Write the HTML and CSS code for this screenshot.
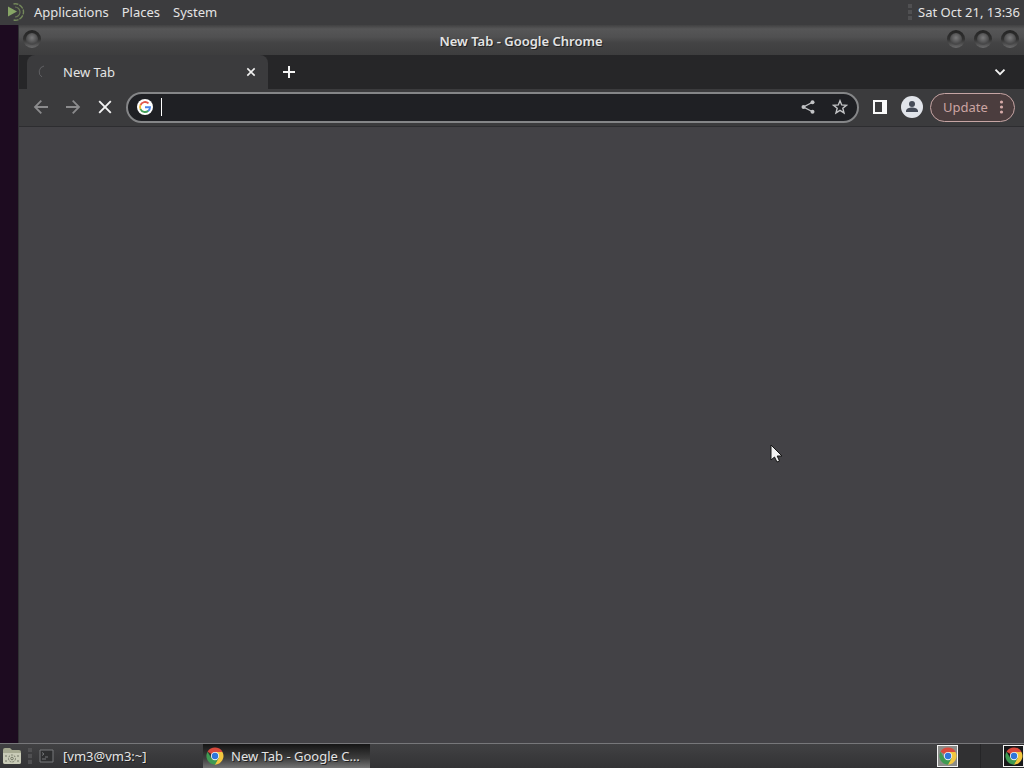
FILE: index.html
```html
<!DOCTYPE html>
<html lang="en">
<head>
<meta charset="utf-8">
<title>New Tab - Google Chrome</title>
<link rel="stylesheet" href="styles.css">
</head>
<body>
<svg class="defs" aria-hidden="true">
  <linearGradient id="rim" x2="0" y2="1"><stop offset="0" stop-color="#242424"/><stop offset=".5" stop-color="#303030"/><stop offset="1" stop-color="#6a6a6b"/></linearGradient>
  <radialGradient id="knob" cy=".4"><stop offset="0" stop-color="#7a7a7b"/><stop offset="1" stop-color="#484849"/></radialGradient>
  <symbol id="chrome" viewBox="0 0 48 48">
    <path fill="#d94a3d" d="M24 24 4.100 12.500A23 23 0 0 1 43.900 12.500L44 13H24z"/>
    <path fill="#f3c63f" d="M24 13h19.900A23 23 0 0 1 24 47l-1-1 10.500-16.500z"/>
    <path fill="#3f9a52" d="M4.100 12.500A23 23 0 0 0 24 47l10-17.500L24 35l-10-5.500z"/>
    <circle cx="24" cy="24" r="11" fill="#f4f4f4"/>
    <circle cx="24" cy="24" r="8.500" fill="#2f76dc"/>
  </symbol>
  <symbol id="orb" viewBox="0 0 20 20">
    <circle cx="10" cy="10" r="9" fill="url(#rim)"/>
    <circle cx="10" cy="10" r="6" fill="url(#knob)"/>
  </symbol>
</svg>
<header class="panel panel-top">
  <nav class="menus">
    <button class="menu"><svg class="distro" viewBox="0 0 20 20" fill="none" stroke="#73875a"><path d="M1 4.500v10l9-5z" fill="#87a566" stroke="none"/><path d="M6.500 2a8.200 8.200 0 1 1 0 16" stroke-width="1.400" stroke-dasharray="5 1"/><path d="M8 5a5 5 0 1 1 0 10" stroke="#6a7a56" stroke-width="1.200"/></svg>Applications</button>
    <button class="menu">Places</button>
    <button class="menu">System</button>
  </nav>
  <div class="clock"><span class="grip"></span><time datetime="2023-10-21T13:36">Sat Oct 21, 13:36</time></div>
</header>
<div class="desktop">
  <main class="window">
    <div class="titlebar">
      <div class="title-side"><button class="orb" aria-label="Window menu"><svg viewBox="0 0 20 20"><use href="#orb"/></svg></button></div>
      <h1 class="title">New Tab - Google Chrome</h1>
      <div class="title-side title-end">
        <button class="orb" aria-label="Minimize"><svg viewBox="0 0 20 20"><use href="#orb"/></svg></button>
        <button class="orb" aria-label="Maximize"><svg viewBox="0 0 20 20"><use href="#orb"/></svg></button>
        <button class="orb" aria-label="Close window"><svg viewBox="0 0 20 20"><use href="#orb"/></svg></button>
      </div>
    </div>
    <div class="tabs">
      <div class="tab">
        <svg class="spinner" viewBox="0 0 16 16" fill="none" stroke="#606063"><path d="M8 2a6 6 0 0 0-2 11"/></svg>
        <span class="tab-name">New Tab</span>
        <button class="icon small" aria-label="Close tab"><svg viewBox="0 0 16 16" fill="none" stroke="#f1f1f1" stroke-width="1.800"><path d="m3.800 3.800 8.400 8.400m0-8.400-8.400 8.400"/></svg></button>
      </div>
      <button class="icon add" aria-label="New tab"><svg viewBox="0 0 16 16" fill="none" stroke="#f5f5f5" stroke-width="2"><path d="M8 2v12M2 8h12"/></svg></button>
      <button class="icon search" aria-label="Search tabs"><svg viewBox="0 0 16 16" fill="none" stroke="#f1f1f1" stroke-width="1.900"><path d="m3.500 5.700 4.500 4.500 4.500-4.500"/></svg></button>
    </div>
    <div class="toolbar">
      <button class="icon" aria-label="Back"><svg viewBox="0 0 16 16" fill="none" stroke="#8b8b8d" stroke-width="1.800"><path d="M15 8H2m6.300-6.300L2 8l6.300 6.300"/></svg></button>
      <button class="icon" aria-label="Forward"><svg viewBox="0 0 16 16" fill="none" stroke="#8b8b8d" stroke-width="1.800"><path d="M1 8h13M7.700 1.700 14 8l-6.300 6.300"/></svg></button>
      <button class="icon" aria-label="Stop"><svg viewBox="0 0 16 16" fill="none" stroke="#f4f4f4" stroke-width="1.900"><path d="m2.200 2.200 11.600 11.600m0-11.600L2.200 13.800"/></svg></button>
      <div class="omnibox">
        <svg class="google" viewBox="0 0 16 16" fill="none" stroke-width="1.900"><circle cx="8" cy="8" r="8" fill="#fff"/><path stroke="#e2574c" d="M11.500 4.400A5 5 0 0 0 3.500 6"/><path stroke="#f1ba36" d="M3.500 5.800a5 5 0 0 0 0 4.400"/><path stroke="#43a05a" d="M3.400 10a5 5 0 0 0 7.900 1.800"/><path stroke="#4a84e8" d="M11.200 11.900A5 5 0 0 0 13 8.200H8"/></svg>
        <span class="caret"></span>
        <input class="address" type="text" aria-label="Address and search bar">
        <button class="icon" aria-label="Share"><svg viewBox="0 0 16 16"><path d="M13 3 3.500 8l9.500 5" fill="none" stroke="#c2c3c5" stroke-width="1.400"/><g fill="#c2c3c5"><circle cx="12.500" cy="3.300" r="2"/><circle cx="3.500" cy="8" r="2"/><circle cx="12.500" cy="12.700" r="2"/></g></svg></button>
        <button class="icon" aria-label="Bookmark this tab"><svg viewBox="0 0 16 16" fill="none" stroke="#c2c3c5" stroke-width="1.400"><path d="m8 1.700 1.700 4.200 4.700.4-3.600 3 1.200 4.600L8 11.400l-4 2.500 1.200-4.600-3.600-3 4.700-.4z"/></svg></button>
      </div>
      <button class="icon" aria-label="Side panel"><svg viewBox="0 0 16 16"><path fill="#fafafa" fill-rule="evenodd" d="M1 1h14v14H1zm2 2v10h7V3z"/></svg></button>
      <button class="avatar" aria-label="Profile"><svg viewBox="0 0 22 22"><circle cx="11" cy="11" r="11" fill="#e1e4ea"/><circle cx="11" cy="8" r="3" fill="#454b57"/><path d="M5 16v-1c0-2.500 3.500-3.500 6-3.500s6 1 6 3.500v1z" fill="#454b57"/></svg></button>
      <button class="update">Update<svg class="dots" viewBox="0 0 4 16" fill="#d5aaa8"><circle cx="2" cy="3" r="1.600"/><circle cx="2" cy="8" r="1.600"/><circle cx="2" cy="13" r="1.600"/></svg></button>
    </div>
    <section class="page" aria-label="Page"></section>
  </main>
</div>
<footer class="panel panel-bottom">
  <button class="files" aria-label="Files"><svg viewBox="0 0 20 18"><path d="M1 3q0-2 2-2h5l2 2h7q2 0 2 2v10q0 2-2 2H3q-2 0-2-2z" fill="#a7aa92"/><path d="M1 6h18v9q0 2-2 2H3q-2 0-2-2z" fill="#c9cbb7"/><g fill="none" stroke="#737766"><circle cx="10" cy="11.500" r="3.500" stroke-dasharray="2 1"/><circle cx="10" cy="11.500" r="1.300"/><path d="M3 9h2m10 0h2M3 14h2m10 0h2"/></g></svg></button>
  <span class="grip"></span>
  <button class="task"><svg class="terminal" viewBox="0 0 16 14"><path d="M1 1h13v12H1z" fill="#2e2f30" stroke="#77797a"/><path d="m3 3.500 2 1.500-2 1.500M6 8h3M3 10h4" fill="none" stroke="#747678"/></svg><span class="task-name">[vm3@vm3:~]</span></button>
  <button class="task active" title="New Tab - Google Chrome"><svg class="chrome" viewBox="0 0 48 48"><use href="#chrome"/></svg><span class="task-name">New Tab - Google C…</span></button>
  <div class="tray">
    <button class="tile light" aria-label="Workspace 1"><svg class="chrome" viewBox="0 0 48 48"><use href="#chrome"/></svg></button>
    <span class="divider"></span>
    <button class="tile" aria-label="Google Chrome"><svg class="chrome" viewBox="0 0 48 48"><use href="#chrome"/></svg></button>
  </div>
</footer>
<svg class="cursor" viewBox="0 0 14 20" aria-hidden="true"><path d="M1 1v15l3.500-3 2.500 5 2.500-1-2.300-5H12z" fill="#f2f2f2" stroke="#151515"/></svg>
</body>
</html>
```

FILE: styles.css
```css
* { box-sizing: border-box; }
body {
  display: flex;
  flex-direction: column;
  min-height: 100vh;
  margin: 0;
  background: #1d0b20;
  color: #e4e4e4;
  font: 13px/18px "Noto Sans", sans-serif;
}
button {
  display: flex;
  align-items: center;
  flex: none;
  padding: 0;
  border: 0;
  background: none;
  color: inherit;
  font: inherit;
}
svg { display: block; flex: none; }
.defs { position: absolute; width: 0; height: 0; }
.panel { display: flex; align-items: center; background: #3c3c3e; }
.panel-top { justify-content: space-between; height: 25px; padding: 0 4px 2px 7px; }
.menus { display: flex; gap: 13px; }
.distro { width: 20px; height: 20px; margin-right: 7px; }
.clock { display: flex; align-items: center; gap: 6px; }
.grip {
  width: 4px;
  height: 16px;
  background: repeating-linear-gradient(#505052 0 4px, #3c3c3e 4px 6px);
}
.desktop { display: flex; flex: 1; padding-left: 18px; }
.window {
  display: flex;
  flex: 1;
  flex-direction: column;
  min-width: 0;
  border-left: 1px solid #303033;
  background: #434246;
}
.titlebar {
  display: flex;
  align-items: center;
  height: 30px;
  padding: 0 4px 0 3px;
  background: linear-gradient(#414142 0, #565657 4px, #505051 12px, #434344 18px, #3d3d3e);
}
.title-side { display: flex; flex: 1; gap: 7px; padding-bottom: 2px; }
.title-end { justify-content: flex-end; }
.title { margin: 0; padding-top: 2px; font-size: 13px; font-weight: 600; text-shadow: 1px 1px #222; }
.orb svg { width: 20px; height: 20px; }
.tabs { display: flex; align-items: center; height: 34px; padding: 0 16px 0 8px; background: #262628; }
.tab {
  display: flex;
  align-items: center;
  width: 241px;
  height: 34px;
  padding: 0 10px 0 9px;
  border-radius: 8px 8px 0 0;
  background: #3b3b3d;
}
.spinner { width: 16px; height: 16px; margin-right: 11px; }
.tab-name { flex: 1; }
.icon { justify-content: center; }
.icon svg { width: 16px; height: 16px; }
.small svg { width: 14px; height: 14px; }
.add { margin-left: 13px; }
.search { margin-left: auto; }
.toolbar {
  display: flex;
  align-items: center;
  gap: 16px;
  height: 38px;
  padding: 0 9px 1px 14px;
  border-bottom: 1px solid #2d2d30;
  background: #3b3b3d;
}
.omnibox {
  display: flex;
  flex: 1;
  align-items: center;
  gap: 16px;
  min-width: 0;
  height: 31px;
  margin: 0 -3px;
  padding: 0 9px;
  border: 2px solid #858688;
  border-radius: 16px;
  background: #1f2024;
}
.google { width: 16px; height: 16px; }
.caret { width: 1px; height: 18px; margin-left: -8px; background: #fff; }
.address {
  flex: 1;
  min-width: 0;
  height: 22px;
  margin-left: -16px;
  padding: 0;
  border: 0;
  outline: 0;
  background: none;
  color: #fff;
  font: 15px/20px "Noto Sans", sans-serif;
}
.avatar { margin-left: -3px; }
.avatar svg { width: 22px; height: 22px; }
.update {
  justify-content: space-between;
  width: 85px;
  height: 29px;
  margin-left: -9px;
  padding: 0 10px 0 12px;
  border: 1px solid #c6a5a4;
  border-radius: 15px;
  background: #4b3d3e;
  color: #cda5a3;
}
.dots { width: 5px; height: 16px; }
.page { flex: 1; }
.panel-bottom { height: 25px; border-top: 1px solid #77777a; background: linear-gradient(#414143, #333335); }
.files { margin: 0 6px 0 2px; }
.files svg { width: 20px; height: 18px; }
.task { width: 166px; height: 24px; padding: 0 2px; }
.panel-bottom .grip { margin-right: 5px; }
.task-name { flex: 1; text-align: left; white-space: nowrap; text-shadow: 1px 1px #222; }
.terminal { width: 16px; height: 14px; margin-right: 8px; }
.chrome { width: 18px; height: 18px; }
.active { width: 167px; background: linear-gradient(#151515, #3e3e3e 60%, #747474); }
.active .chrome { margin: 0 7px 0 1px; }
.tray { display: flex; align-items: center; height: 24px; margin-left: auto; background: #303032; }
.tile { justify-content: center; width: 21px; height: 22px; border: 1px solid #f4f4f4; background: #171719; }
.light { background: #8b8c89; }
.divider { width: 1px; height: 24px; margin: 0 22px; background: #252527; }
.cursor { position: absolute; left: 770px; top: 444px; width: 14px; height: 20px; }
```
